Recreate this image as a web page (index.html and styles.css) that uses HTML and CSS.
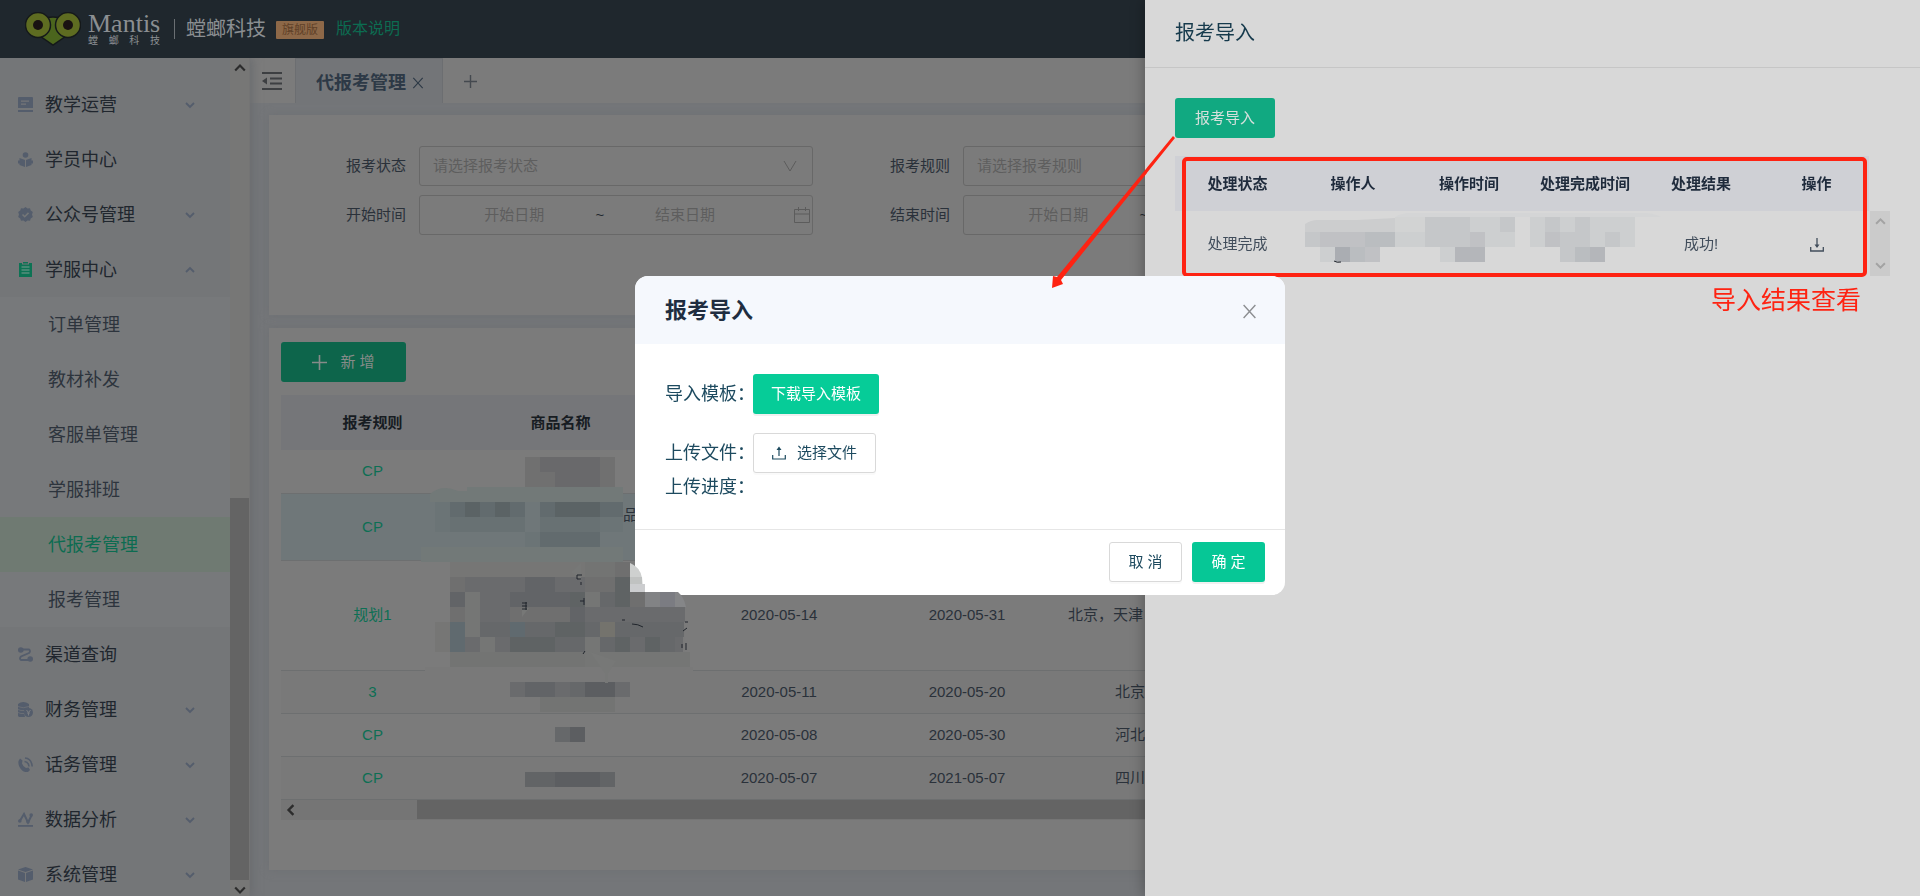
FILE: index.html
```html
<!DOCTYPE html>
<html lang="zh-CN">
<head>
<meta charset="utf-8">
<title>代报考管理</title>
<link rel="stylesheet" href="styles.css">
</head>
<body>
<svg class="defs" aria-hidden="true">
  <symbol id="down" viewBox="0 0 10 10"><path d="M1 3l4 4 4-4" fill="none" stroke="currentColor" stroke-width="1.8"/></symbol>
  <symbol id="up" viewBox="0 0 10 10"><path d="M1 7l4-4 4 4" fill="none" stroke="currentColor" stroke-width="1.8"/></symbol>
  <symbol id="left" viewBox="0 0 10 10"><path d="M7 1L3 5l4 4" fill="none" stroke="currentColor" stroke-width="2"/></symbol>
  <symbol id="cross" viewBox="0 0 14 14"><path d="M1.500 1l11 12M12.500 1l-11 12" fill="none" stroke="currentColor" stroke-width="1.300"/></symbol>
  <symbol id="plus" viewBox="0 0 14 14"><path d="M7 0v14M0 7h14" fill="none" stroke="currentColor" stroke-width="1.500"/></symbol>
  <symbol id="calendar" viewBox="0 0 16 16"><path d="M.5 2.500h15v13H.5zM.5 7h15M4.500 0v4M11.500 0v4" fill="none" stroke="currentColor"/></symbol>
</svg>

<div class="app">
  <header class="topbar">
    <svg class="owl" viewBox="0 0 56 34" aria-hidden="true">
      <path d="M17 7q11-4 22 0l5 15-16 11L12 22z" fill="#4b651d" stroke="#15191a" stroke-width="1.500"/>
      <circle cx="13" cy="13" r="12.500" fill="#5e6c21" stroke="#15191a" stroke-width="1.500"/>
      <circle cx="43" cy="13" r="12.500" fill="#5e6c21" stroke="#15191a" stroke-width="1.500"/>
      <circle cx="13" cy="13" r="5" fill="#191212"/><circle cx="43" cy="13" r="5" fill="#191212"/>
    </svg>
    <div class="brand">
      <span class="brand-en">Mantis</span>
      <span class="brand-cn"><i>螳</i><i>螂</i><i>科</i><i>技</i></span>
    </div>
    <span class="bar"></span>
    <span class="company">螳螂科技</span>
    <span class="edition">旗舰版</span>
    <a class="release" href="#">版本说明</a>
  </header>

  <div class="body">
    <nav class="side">
      <ul class="menu">
        <li><a href="#"><svg viewBox="0 0 15 15"><path fill="currentColor" fill-rule="evenodd" d="M1 0h13q1 0 1 1v10H0V1q0-1 1-1zM3 3.500v1.200h8V3.500zM3 6.500v1.200h5V6.500zM0 13h15v2H0z"/></svg><span>教学运营</span><svg class="chev"><use href="#down"/></svg></a></li>
        <li><a href="#"><svg viewBox="0 0 15 15"><circle cx="7.500" cy="3" r="2.800" fill="currentColor"/><path fill="currentColor" d="M1.500 6L7 8v7l-5.500-2v-1.500H0v-3h1.500zM13.500 6L8 8v7l5.500-2v-1.500H15v-3h-1.500z"/></svg><span>学员中心</span></a></li>
        <li><a href="#"><svg viewBox="0 0 15 15"><path fill="currentColor" d="M7.500 0l2 1.500 2.500-.3.700 2.300 2.100 1.500-.8 2.500.8 2.500-2.100 1.500-.7 2.300-2.500-.3-2 1.500-2-1.500-2.500.3-.7-2.300L.2 10 1 7.500.2 5l2.100-1.500L3 1.200l2.500.3z"/><path d="M4.500 7.500l2.200 2.200 3.800-3.800" fill="none" stroke="#747678" stroke-width="1.600"/></svg><span>公众号管理</span><svg class="chev"><use href="#down"/></svg></a></li>
        <li><a href="#"><svg class="on" viewBox="0 0 15 15"><path fill="currentColor" d="M1 1h3v1.500h7V1h3v14H1zM5 0h5v1.500H5z"/><path d="M3.500 5h8M3.500 8h8M3.500 11h8" stroke="#7d9b90" stroke-width="1.200"/></svg><span>学服中心</span><svg class="chev"><use href="#up"/></svg></a>
          <ul class="sub">
            <li><a href="#">订单管理</a></li>
            <li><a href="#">教材补发</a></li>
            <li><a href="#">客服单管理</a></li>
            <li><a href="#">学服排班</a></li>
            <li><a class="active" href="#">代报考管理</a></li>
            <li><a href="#">报考管理</a></li>
          </ul>
        </li>
        <li><a href="#"><svg viewBox="0 0 15 15"><circle cx="2.800" cy="3" r="2.800" fill="currentColor"/><circle cx="12.200" cy="12" r="2.800" fill="currentColor"/><path d="M3 2.500h8q2 1.500 0 3.500l-8 3.500q-2 2 0 3.500h9" fill="none" stroke="currentColor" stroke-width="1.800"/></svg><span>渠道查询</span></a></li>
        <li><a href="#"><svg viewBox="0 0 15 15"><path fill="currentColor" d="M0 2q5-4 11 0v4q-5 1-5 5l1 4H1l-1-1z"/><path d="M0 4.500q5 2.500 11 0M0 7.500q3 1.500 6 1M0 10.500q3 1.500 6 1" fill="none" stroke="#747678" stroke-width=".7"/><circle cx="10.500" cy="10.500" r="4.500" fill="currentColor"/><path d="M8.500 8l2 2.500 2-2.500M10.500 10.500v3M9 11h3" fill="none" stroke="#7b7d80"/></svg><span>财务管理</span><svg class="chev"><use href="#down"/></svg></a></li>
        <li><a href="#"><svg viewBox="0 0 15 15"><path fill="currentColor" d="M2 1.500l2.500 2-.5 3q1 3 4 4.500l2.500-.5 1.500 2.500-2 2Q5 16 1.500 10-1 5 2 1.500z"/><path d="M6.500 4.500q4 .5 4.500 5M7 1q6.500.5 7.200 8.500" fill="none" stroke="currentColor" stroke-width="1.600"/></svg><span>话务管理</span><svg class="chev"><use href="#down"/></svg></a></li>
        <li><a href="#"><svg viewBox="0 0 15 15"><path d="M1.500 9.500L6 2l4 8.500 3.500-7" fill="none" stroke="currentColor" stroke-width="2"/><circle cx="1.800" cy="9" r="1.800" fill="currentColor"/><circle cx="13.200" cy="3" r="1.800" fill="currentColor"/><circle cx="10" cy="9.800" r="1.800" fill="currentColor"/><path d="M0 13h15v1.800H0z" fill="currentColor"/></svg><span>数据分析</span><svg class="chev"><use href="#down"/></svg></a></li>
        <li><a href="#"><svg viewBox="0 0 15 15"><path fill="currentColor" d="M7.500 0L15 2.500 7.500 5 0 2.500zM0 3.500L7 6v9l-7-2.500zM15 3.500L8 6v9l7-2.500z"/></svg><span>系统管理</span><svg class="chev"><use href="#down"/></svg></a></li>
      </ul>
      <div class="vscroll">
        <svg><use href="#up"/></svg>
        <div class="vtrack"></div><div class="vthumb"></div>
        <svg><use href="#down"/></svg>
      </div>
    </nav>

    <main class="main">
      <div class="tabs">
        <button class="fold" type="button" aria-label="收起菜单"><svg viewBox="0 0 20 18"><path d="M0 1h20M8 6.500h12M8 11.500h12M0 17h20" stroke="currentColor" stroke-width="1.800"/><path d="M0 9l5-3.500v7z" fill="currentColor"/></svg></button>
        <div class="tab"><span>代报考管理</span><button type="button" aria-label="关闭"><svg><use href="#cross"/></svg></button></div>
        <button class="add-tab" type="button" aria-label="新标签"><svg><use href="#plus"/></svg></button>
      </div>
      <div class="content">
        <form class="card filters">
          <div class="field"><label for="st">报考状态</label><div class="box pick"><select id="st"><option>请选择报考状态</option></select><svg viewBox="0 0 14 14"><path d="M1 2l6 10 6-10" fill="none" stroke="currentColor"/></svg></div></div>
          <div class="field"><label for="ru">报考规则</label><div class="box pick"><select id="ru"><option>请选择报考规则</option></select></div></div>
          <div class="field third"></div>
          <div class="field"><label for="s1">开始时间</label><div class="box range"><input id="s1" placeholder="开始日期"><b>~</b><input aria-label="开始时间止" placeholder="结束日期"><svg><use href="#calendar"/></svg></div></div>
          <div class="field"><label for="e1">结束时间</label><div class="box range"><input id="e1" placeholder="开始日期"><b>~</b></div></div>
        </form>
        <section class="card list">
          <button class="btn create" type="button"><svg><use href="#plus"/></svg><span>新 增</span></button>
          <div class="grid-wrap">
            <table class="grid">
              <colgroup><col class="c1"><col class="c2"><col class="c3"><col class="c3"><col></colgroup>
              <thead><tr><th>报考规则</th><th>商品名称</th><th></th><th></th><th></th></tr></thead>
              <tbody>
                <tr class="r1"><td><a href="#">CP</a></td><td></td><td></td><td></td><td></td></tr>
                <tr class="r2"><td><a href="#">CP</a></td><td class="tail">品</td><td></td><td></td><td></td></tr>
                <tr class="r3"><td><a href="#">规划1</a></td><td></td><td>2020-05-14</td><td>2020-05-31</td><td class="long">北京，天津</td></tr>
                <tr class="r1 odd"><td><a href="#">3</a></td><td></td><td>2020-05-11</td><td>2020-05-20</td><td>北京</td></tr>
                <tr class="r1"><td><a href="#">CP</a></td><td></td><td>2020-05-08</td><td>2020-05-30</td><td>河北</td></tr>
                <tr class="r1 odd"><td><a href="#">CP</a></td><td></td><td>2020-05-07</td><td>2021-05-07</td><td>四川</td></tr>
              </tbody>
            </table>
            <div class="hscroll"><svg><use href="#left"/></svg><div class="hthumb"></div></div>
          </div>
        </section>
      </div>
    </main>
  </div>
</div>

<aside class="drawer">
  <h2 class="drawer-title">报考导入</h2>
  <div class="drawer-body">
    <button class="btn import" type="button">报考导入</button>
    <div class="results">
      <div class="result-main">
        <table class="result">
          <colgroup><col class="d1"><col class="d2"><col class="d2"><col class="d2"><col class="d2"><col></colgroup>
          <thead><tr><th>处理状态</th><th>操作人</th><th>操作时间</th><th>处理完成时间</th><th>处理结果</th><th>操作</th></tr></thead>
          <tbody><tr><td>处理完成</td><td></td><td></td><td></td><td>成功!</td><td><button class="dl" type="button" aria-label="下载"><svg viewBox="0 0 14 14"><path d="M.7 9v4h12.600V9M7 0v9" fill="none" stroke="currentColor" stroke-width="1.300"/><path d="M4.500 6.500h5L7 10z" fill="currentColor"/></svg></button></td></tr></tbody>
        </table>
        <div class="frame"></div>
      </div>
      <div class="mini-scroll"><svg><use href="#up"/></svg><svg><use href="#down"/></svg></div>
    </div>
    <p class="note">导入结果查看</p>
  </div>
</aside>

<div class="overlay">
  <section class="modal" role="dialog" aria-labelledby="mt">
    <header class="modal-head"><h1 id="mt">报考导入</h1><button type="button" aria-label="关闭"><svg><use href="#cross"/></svg></button></header>
    <div class="modal-body">
      <div class="line"><span class="cap">导入模板：</span><button class="btn solid" type="button">下载导入模板</button></div>
      <div class="line up"><span class="cap">上传文件：</span><button class="btn ghost" type="button"><svg viewBox="0 0 14 14"><path d="M.7 9v4h12.600V9M7 10V2" fill="none" stroke="currentColor" stroke-width="1.200"/><path d="M4.500 4h5L7 .5z" fill="currentColor"/></svg>选择文件</button></div>
      <div class="line"><span class="cap">上传进度：</span></div>
    </div>
    <footer class="modal-foot"><button class="btn ghost" type="button">取 消</button><button class="btn solid ok" type="button">确 定</button></footer>
  </section>
</div>

<svg class="marks" viewBox="0 0 1920 896" aria-hidden="true">
  <g class="smear">
    <path fill="#727978" d="M430 502v-8q12-10 28-3h9v-4h156v15zM421 547h202v15H421z"/>
    <path fill="#797979" d="M425 667h268v14H425z"/>
    <path fill="#ced0cf" d="M630 563q11 5 12 15h-12z"/><path fill="#c0c2c1" d="M630 577h12l1 15h-13z"/><path fill="#cccdcf" d="M630 584h15v8h-15z"/>
    <path fill="#7a7a7a" d="M615 607h70v60h-70z"/>
  </g>
  <g fill="none" stroke-width="15">
    <path stroke="#707070" d="M525 464.500h15M525 479.500h30M600 479.500h15M600 464.500h15"/>
    <path stroke="#69696b" d="M540 464.500h60M555 479.500h45"/>
    <path stroke="#6b7476" d="M435 509.500h15M435 524.500h15M600 524.500h23M525 539.500h15"/>
    <path stroke="#626b6e" d="M450 509.500h15M480 509.500h15M510 509.500h15M540 509.500h15M600 509.500h23M540 539.500h60"/>
    <path stroke="#5b6365" d="M465 509.500h15M495 509.500h15M555 509.500h45"/>
    <path stroke="#687173" d="M450 524.500h75M540 524.500h60"/>
    <path stroke="#767675" d="M450 569.500h135M435 629.500h15M435 644.500h15"/>
    <path stroke="#737473" d="M585 569.500h30M540 704.500h75M450 659.500h135"/>
    <path stroke="#757675" d="M585 659.500h105M465 599.500h15M465 614.500h15M465 629.500h15M480 644.500h15M585 644.500h15M585 599.500h15"/>
    <path stroke="#6f6f6f" d="M615 569.500h15M450 584.500h15M585 584.500h30M450 614.500h15M510 614.500h60M630 599.500h15"/>
    <path stroke="#6a6b6d" d="M465 584.500h60M555 584.500h30M480 599.500h30M480 614.500h30M585 614.500h100M465 644.500h15M495 644.500h15M630 644.500h15M675 644.500h8M510 689.500h15M555 689.500h15M615 689.500h15"/>
    <path stroke="#626467" d="M525 584.500h30M450 599.500h15M510 599.500h60M525 689.500h30M570 614.500h15"/>
    <path stroke="#5f6364" d="M615 584.500h15M570 599.500h15M615 599.500h15M555 629.500h30M510 644.500h45M615 644.500h15M645 644.500h15"/>
    <path stroke="#606a6f" d="M450 629.500h15M450 644.500h15M510 629.500h15"/>
    <path stroke="#66686a" d="M480 629.500h30M525 629.500h30M585 629.500h15M615 629.500h69M555 644.500h30M600 644.500h15M660 644.500h15M600 599.500h15M570 689.500h15M555 734.500h15"/>
    <path stroke="#74736d" d="M600 629.500h15"/>
    <path stroke="#828385" d="M645 599.500h15"/><path stroke="#7b7c82" d="M660 599.500h15"/>
    <path stroke="#5c5e61" d="M585 689.500h30M570 734.500h15M555 779.500h45"/>
    <path stroke="#626466" d="M525 779.500h30M600 779.500h15"/>
    <path stroke="#cdcfd0" d="M1470 224.500h30M1530 224.500h15M1560 224.500h15M1590 224.500h45M1395 239.500h30M1485 239.500h30M1530 239.500h15M1590 239.500h15M1620 239.500h15M1320 254.500h15M1440 254.500h15"/>
    <path stroke="#d2d3d3" d="M1395 224.500h30"/>
    <path stroke="#c5c7c9" d="M1425 224.500h45M1500 224.500h15M1545 224.500h15M1575 224.500h15M1305 239.500h15M1425 239.500h45M1560 239.500h30M1605 239.500h15M1560 254.500h15"/>
    <path stroke="#c0c1c4" d="M1320 239.500h45M1470 239.500h15M1545 239.500h15M1365 254.500h15"/>
    <path stroke="#babdc0" d="M1365 239.500h30M1350 254.500h15M1575 254.500h15"/>
    <path stroke="#b4b6ba" d="M1455 254.500h30M1590 254.500h15"/><path stroke="#aaadb2" d="M1335 254.500h15"/>
  </g>
  <path fill="#858688" d="M675 592h3q6 5 8 15h-11z"/>
  <path fill="#cccdce" d="M1305 232v-8q6-4 12-4h40l38-2v14z"/>
  <path fill="#d4d5d6" d="M1395 217q5-3 12-4h240q8 1 14 4z"/>
  <path fill="#777877" d="M571 572l10-9v18zM522 608v9l7-9zM590 652l26 9-8 12v10h-3v-10z"/>
  <path fill="none" stroke="#20252c" d="M577 575h5M577 575v4h4M581 582v3M522 603h5M522 606h5M522 609h5M526 602v8M580 601h4M584 598v7M622 620h3M632 624q6 0 11 3M685 622h3M683 631l4-3M682 644v4M686 643v7M583 654l2-3M1334 261q3 2 7 1"/>
  <path class="red" d="M1175 138L1061 280l2 4-11 4 1-12 4 1L1173 136z"/>
</svg>
</body>
</html>
```
FILE: styles.css
```css
* { box-sizing: border-box; }
body, h1, h2, p, ul { margin: 0; padding: 0; }
body { height: 100vh; overflow: hidden; font: 15px/22px "Liberation Sans", "Noto Sans CJK SC", sans-serif; color: #2a313a; background: #747679; }
ul { list-style: none; }
a { color: inherit; text-decoration: none; }
button, input, select { font: inherit; color: inherit; border: 0; padding: 0; margin: 0; background: none; outline: 0; }
svg { display: block; flex: none; }
.defs { position: absolute; width: 0; height: 0; }
.app { height: 100vh; display: flex; flex-direction: column; }

.topbar { height: 58px; flex: none; display: flex; align-items: center; padding: 0 0 1px 25px; background: #1f272d; color: #8b8f92; z-index: 2; }
.owl { width: 56px; height: 34px; }
.brand { width: 72px; margin-left: 7px; display: flex; flex-direction: column; }
.brand-en { font: 26px/24px "Liberation Serif", serif; }
.brand-cn { display: flex; justify-content: space-between; font-size: 10px; line-height: 10px; }
.brand-cn i { font-style: normal; }
.bar { width: 1px; height: 20px; margin: 0 11px 0 14px; background: #6a6f73; }
.company { font-size: 20px; }
.edition { margin: 3px 12px 0 10px; padding: 0 6px; font-size: 12px; line-height: 18px; background: #8d6848; color: #5f4027; border-radius: 1px; }
.release { font-size: 16px; color: #0c6c51; }

.body { flex: 1; min-height: 0; display: flex; }
.side { width: 250px; flex: none; display: flex; background: #747678; box-shadow: 3px 0 8px #6b6d70; z-index: 1; }
.menu { flex: 1; padding-top: 19px; overflow: hidden; }
.menu a { display: flex; align-items: center; height: 55px; padding: 0 35px 0 18px; font-size: 18px; color: #20262e; }
.menu a svg { width: 15px; height: 15px; margin-right: 12px; color: #545d6c; }
.menu a span { flex: 1; }
.menu a svg.on { color: #0d7354; }
.menu a svg.chev { width: 10px; height: 10px; margin: 0; }
.sub { background: #77797b; }
.menu .sub a { padding-left: 48px; color: #2d343d; }
.menu .sub a.active { background: #6f7a72; color: #0c6c51; }
.vscroll { width: 20px; display: flex; flex-direction: column; align-items: center; background: #777776; border-right: 1px solid #747474; }
.vscroll svg { width: 12px; height: 12px; margin: 4px 0 0; color: #2c2c2c; }
.vtrack { flex: 425; }
.vthumb { flex: 382; width: 19px; background: #646464; }

.main { flex: 1; min-width: 0; display: flex; flex-direction: column; }
.tabs { height: 45px; flex: none; display: flex; background: #7b7b7b; color: #2d3946; }
.fold { width: 45px; padding-left: 12px; }
.fold svg { width: 20px; height: 18px; color: #3d3f42; }
.tab { display: flex; align-items: center; gap: 6px; padding: 3px 18px 0 20px; border: solid #6c6e71; border-width: 1px 1px 0; background: #737578; font-size: 18px; font-weight: bold; }
.tab svg { width: 12px; height: 12px; }
.add-tab svg { width: 13px; height: 13px; margin: 2px 0 0 21px; color: #44494f; }
.content { flex: 1; display: flex; flex-direction: column; gap: 13px; padding: 12px 19px 26px; }
.card { background: #7b7b7b; box-shadow: 0 0 8px #6e7073; }
.filters { display: grid; grid-template-columns: repeat(3, 1fr); gap: 9px 0; padding: 31px 0 80px; }
.field { display: flex; align-items: center; }
.field label { width: 137px; margin-right: 13px; text-align: right; }
.box { flex: 1; height: 40px; display: flex; align-items: center; border: 1px solid #686868; border-radius: 3px; color: #5c5c5c; }
.box select { flex: 1; height: 38px; padding-left: 13px; appearance: none; color: #5e5e5e; }
.pick svg { width: 14px; height: 14px; margin-right: 15px; }
.range { padding: 0 2px 0 11px; }
.range input { width: 44%; text-align: center; }
.range input::placeholder { color: #5e5e5e; opacity: 1; }
.range b { width: 4px; display: flex; justify-content: center; font-weight: normal; color: #22282f; }
.range svg { width: 16px; height: 16px; margin-left: auto; }

.btn { display: inline-flex; align-items: center; justify-content: center; height: 40px; border-radius: 3px; white-space: nowrap; }
.list { flex: 1; padding: 14px 12px; }
.create { width: 125px; gap: 13px; background: #0d654b; color: #878b89; }
.create svg { width: 15px; height: 15px; }
.grid-wrap { margin-top: 13px; }
.grid { width: 100%; table-layout: fixed; border-collapse: collapse; text-align: center; white-space: nowrap; }
.grid .c1 { width: 183px; }
.grid .c2 { width: 221px; }
.grid .c3 { width: 188px; }
.grid th { height: 55px; padding: 0; background: #757679; color: #171c22; }
.grid th:nth-child(2), .grid td:nth-child(2) { padding-right: 28px; }
.grid td { padding: 0; border-bottom: 1px solid #6d6f70; }
.grid td:last-child { text-align: left; padding-left: 54px; }
.grid td.long:last-child { padding-left: 7px; }
.grid td.tail:nth-child(2) { text-align: right; padding: 0 47px 24px 0; }
.grid a { color: #0d6f54; }
.r1 td { height: 43px; }
.r2 td { height: 67px; background: #6f7779; }
.r3 td { height: 110px; }
.odd td { background: #797979; }
.hscroll { height: 20px; display: flex; align-items: center; background: #757575; }
.hscroll svg { width: 12px; height: 12px; margin: 0 120px 0 4px; color: #2c2c2c; }
.hthumb { flex: 1; height: 19px; background: #646464; }

.drawer { position: fixed; top: 0; right: 0; bottom: 0; z-index: 3; width: 775px; background: #d8d8d8; box-shadow: -2px 0 12px rgba(0, 0, 0, .25); }
.drawer-title { height: 68px; padding: 0 30px; border-bottom: 1px solid #c6c6c6; font-size: 20px; line-height: 67px; font-weight: normal; color: #163a4c; }
.drawer-body { padding: 30px; }
.import { padding: 0 20px; background: #11a981; color: #d6e0dc; }
.results { display: flex; align-items: flex-end; margin-top: 18px; }
.result-main { flex: 1; position: relative; }
.result { width: 100%; table-layout: fixed; border-collapse: collapse; text-align: center; white-space: nowrap; color: #414d5b; }
.result .d1 { width: 120px; }
.result .d2 { width: 116px; }
.result th { height: 55px; padding: 0; background: #cfd0d5; color: #1f2b3c; }
.result td { height: 65px; padding: 0; }
.result th:first-child, .result td:first-child, .result th:last-child, .result td:last-child { padding-left: 5px; }
.dl { vertical-align: middle; }
.dl svg { width: 14px; height: 14px; }
.frame { position: absolute; inset: 1px 2px -1px 7px; border: 4px solid #fe2312; border-radius: 5px; }
.mini-scroll { width: 20px; height: 65px; margin-left: 1px; display: flex; flex-direction: column; justify-content: space-between; align-items: center; padding: 5px 0; background: #cbcbcb; color: #a3a3a3; }
.mini-scroll svg { width: 11px; height: 11px; }
.note { margin-top: 9px; padding-right: 29px; text-align: right; font-size: 25px; line-height: 30px; color: #fe2312; }

.overlay { position: fixed; inset: 0; z-index: 4; display: flex; justify-content: center; align-items: flex-start; padding-top: 276px; }
.modal { width: 650px; background: #fff; border-radius: 13px; overflow: hidden; color: #1d4a5f; }
.modal-head { display: flex; align-items: center; justify-content: space-between; height: 68px; padding: 2px 28px 0 30px; background: #f5f8fd; }
.modal-head h1 { font-size: 22px; line-height: 30px; color: #202d40; }
.modal-head svg { width: 15px; height: 17px; color: #8c8e91; }
.modal-body { padding: 30px 30px 28px; }
.line { display: flex; align-items: center; line-height: 28px; }
.line.up { margin-top: 19px; }
.cap { width: 88px; font-size: 18px; white-space: nowrap; }
.solid { padding: 0 18px; background: #06cc98; color: #fff; box-shadow: 0 2px 0 #f0f0f0; }
.ghost { padding: 0 18px; gap: 11px; border: 1px solid #d9d9d9; background: #fff; box-shadow: 0 2px 0 #fafafa; }
.ghost svg { width: 14px; height: 14px; }
.modal-foot { display: flex; justify-content: flex-end; gap: 10px; padding: 12px 20px 13px; border-top: 1px solid #e6e6e6; }
.modal-foot .btn { width: 73px; padding: 0; }
.ok { background: #06c796; }

.marks { position: fixed; top: 0; left: 0; z-index: 5; width: 1920px; height: 896px; pointer-events: none; }
.red { fill: #fe2312; }
```
